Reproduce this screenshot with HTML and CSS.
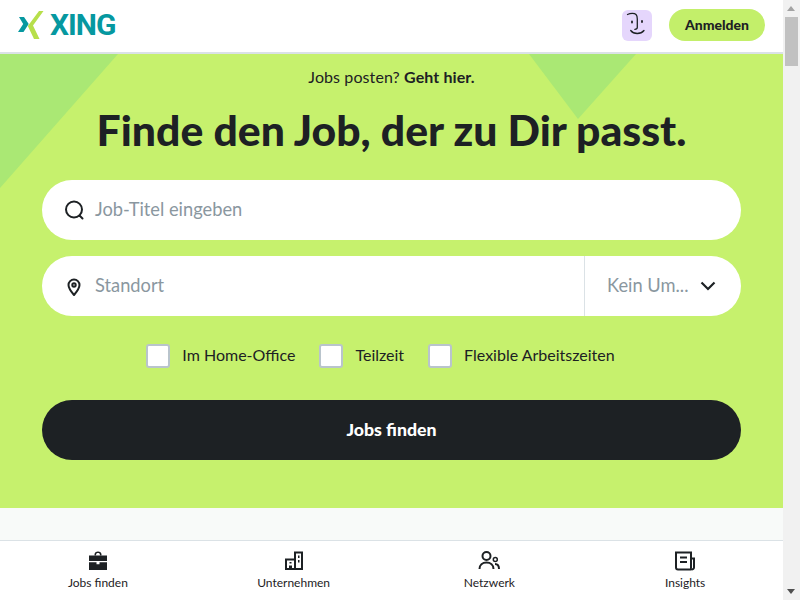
FILE: index.html
```html
<!DOCTYPE html>
<html lang="de">
<head>
<meta charset="utf-8">
<title>XING Jobs</title>
<link rel="stylesheet" href="styles.css">
</head>
<body>
<div class="window">
  <div class="page">
    <header class="topbar">
      <a class="logo">
        <svg class="logo-mark" width="26" height="30" viewBox="0 0 26 30">
          <path fill="#0698a0" d="M1 7h5l4.700 7-5.200 8H0l5.200-8z"/>
          <path fill="#b7df4b" d="M21 1h4.500L15 15.500 21.500 29H16L9.800 16z"/>
        </svg>
        <span class="logo-text">XING</span>
      </a>
      <div class="top-actions">
        <div class="avatar">
          <svg width="30" height="31" viewBox="0 0 30 31" fill="none" stroke="#1d2124" stroke-width="1.300" stroke-linecap="round">
            <path d="M5.500 4.500c3-1.400 7-1.400 8.500 0 1.200 1.200 1.300 2.500 1.300 4.500v8.500c0 1.200-1 1.800-2.500 1.800"/>
            <path d="M8.700 20.500c3 4 10 4 13.300 0"/>
            <path d="M10 11.500v1M20 11v1" stroke-width="1.800"/>
          </svg>
        </div>
        <button class="login">Anmelden</button>
      </div>
    </header>
    <main class="hero">
      <svg class="shape" width="783" height="135" viewBox="0 0 783 135">
        <path fill="#aae874" d="M0 0h118L0 134zM529 0h107l-58 65z"/>
      </svg>
      <p class="post">Jobs posten? <b>Geht hier.</b></p>
      <h1>Finde den Job, der zu Dir passt.</h1>
      <div class="field">
        <svg class="field-icon" width="24" height="24" viewBox="0 0 24 24" fill="none" stroke="#1d2124" stroke-width="2">
          <circle cx="12" cy="11.500" r="8"/>
          <path d="M17.500 17.500l3 3" stroke-linecap="round"/>
        </svg>
        <span class="placeholder">Job-Titel eingeben</span>
      </div>
      <div class="field location">
        <div class="loc-input">
          <svg class="field-icon" width="24" height="24" viewBox="0 0 24 24" fill="none" stroke="#1d2124" stroke-width="2">
            <path d="M12 21c-3-3.500-5.500-6.500-5.500-10a5.500 5.500 0 0 1 11 0c0 3.500-2.500 6.500-5.500 10z" stroke-linejoin="round"/>
            <circle cx="12" cy="11" r="1.700"/>
          </svg>
          <span class="placeholder">Standort</span>
        </div>
        <div class="radius">
          <span class="placeholder">Kein Um...</span>
          <svg width="16" height="10" viewBox="0 0 16 10" fill="none" stroke="#1d2124" stroke-width="2.200">
            <path d="M1.500 1.500L8 8l6.500-6.500"/>
          </svg>
        </div>
      </div>
      <div class="checks">
        <label class="check"><span class="box"></span><span class="check-text">Im Home-Office</span></label>
        <label class="check"><span class="box"></span><span class="check-text">Teilzeit</span></label>
        <label class="check"><span class="box"></span><span class="check-text">Flexible Arbeitszeiten</span></label>
      </div>
      <button class="submit">Jobs finden</button>
    </main>
    <div class="spacer"></div>
    <nav class="tabs">
      <a class="tab">
        <svg width="24" height="24" viewBox="0 0 24 24" fill="#1d2124">
          <path d="M8.500 6.500V5.500C8.500 3.500 10 2.500 12 2.500s3.500 1 3.500 3v1h-1.600v-1c0-1-.8-1.500-1.900-1.500s-1.900.5-1.900 1.500v1z"/>
          <path d="M3 6.500h18V12H3zM3 13.200h7.500v2h3v-2H21V21H3z"/>
        </svg>
        <span>Jobs finden</span>
      </a>
      <a class="tab">
        <svg width="24" height="24" viewBox="0 0 24 24" fill="#1d2124">
          <path fill-rule="evenodd" d="M3 9.500h9V2.500h9V21H3zM14 4.500V19h5V4.500zM5 11.500V19h2v-2.500h3V19h2v-7.500zM7.500 13h2v1.500h-2zM16 6.500h1.500V9H16zM16 11h1.500v2.500H16z"/>
        </svg>
        <span>Unternehmen</span>
      </a>
      <a class="tab">
        <svg width="24" height="24" viewBox="0 0 24 24" fill="none" stroke="#1d2124" stroke-width="2">
          <circle cx="9.500" cy="7" r="4"/>
          <path d="M2.500 20c0-4 3-6.500 7-6.500s7 2.500 7 6.500"/>
          <circle cx="18.300" cy="10.500" r="2" stroke-width="1.500"/>
          <path d="M18 15c2.500 0 4 2 4 5" stroke-width="2"/>
        </svg>
        <span>Netzwerk</span>
      </a>
      <a class="tab">
        <svg width="24" height="24" viewBox="0 0 24 24" fill="none" stroke="#1d2124" stroke-width="2">
          <path d="M18 20.500H5a2 2 0 0 1-2-2V3.500h15v16M18 9.500h3v9a2 2 0 0 1-3 1.700"/>
          <path d="M7 8.500h7M7 13h7"/>
        </svg>
        <span>Insights</span>
      </a>
    </nav>
  </div>
  <div class="scrollbar">
    <span class="arrow-up"></span>
    <span class="thumb"></span>
    <span class="arrow-down"></span>
  </div>
</div>
</body>
</html>
```
FILE: styles.css
```css
* { box-sizing: border-box; }
html, body { margin: 0; height: 100%; }
body { font-family: Lato, "Noto Sans", sans-serif; color: #1d2124; overflow: hidden; }
.window { display: flex; width: 800px; height: 600px; }
.page { flex: 1; min-width: 0; display: flex; flex-direction: column; background: #f8faf9; }

.topbar { height: 54px; flex: none; background: #fff; border-bottom: 2px solid #dbe2e6; display: flex; align-items: center; justify-content: space-between; padding: 0 18px 2px 18px; }
.logo { display: flex; align-items: center; gap: 6px; }
.logo-text { font-family: Roboto, "Noto Sans", sans-serif; font-size: 30px; font-weight: 700; letter-spacing: -1px; color: #0698a0; line-height: 1; }
.top-actions { display: flex; align-items: center; gap: 17px; }
.avatar { width: 30px; height: 31px; border-radius: 6px; background: #e5d6fc; display: flex; }
.login { width: 96px; height: 32px; border: 0; border-radius: 16px; background: #c3ef6a; color: #1d2124; font: 900 14px Lato, sans-serif; padding: 0 0 2px; }

.hero { position: relative; height: 454px; flex: none; background: #c6f16d; padding: 0 42px; display: flex; flex-direction: column; }
.shape { position: absolute; left: 0; top: 0; }
.post { position: relative; margin: 12px 0 0; height: 22px; line-height: 22px; text-align: center; font-size: 16px; letter-spacing: .1px; }
.post b { font-weight: 700; }
h1 { position: relative; margin: 12px 0 20px; height: 60px; line-height: 60px; text-align: center; font-size: 42.700px; font-weight: 900; white-space: nowrap; }
.field { position: relative; height: 60px; margin-top: 16px; background: #fff; border-radius: 30px; display: flex; align-items: center; padding-left: 20px; gap: 9px; }
h1 + .field { margin-top: 0; }
.field-icon { flex: none; }
.placeholder { font-size: 18.300px; color: #8a979f; white-space: nowrap; padding-bottom: 3px; }
.location { padding-left: 0; gap: 0; }
.loc-input { flex: 1; height: 100%; display: flex; align-items: center; gap: 9px; padding-left: 20px; border-right: 1px solid #dbe2e6; }
.radius { width: 156px; flex: none; display: flex; align-items: center; gap: 11px; padding-left: 22px; }
.checks { position: relative; display: flex; justify-content: center; gap: 24px; margin-top: 28px; height: 24px; padding-right: 22px; }
.check { display: flex; align-items: center; gap: 12px; font-size: 16px; white-space: nowrap; }
.check-text { padding-bottom: 3px; }
.box { width: 24px; height: 24px; background: #fff; border: 2px solid #b9c4cc; border-radius: 3px; }
.submit { position: relative; height: 60px; margin-top: 32px; border: 0; border-radius: 30px; background: #1d2124; color: #fff; font: 900 17.700px Lato, sans-serif; padding: 0 0 2px; }

.spacer { flex: 1; }
.tabs { height: 60px; flex: none; background: #fff; border-top: 1px solid #dbe2e6; display: grid; grid-template-columns: repeat(4, 1fr); }
.tab { display: flex; flex-direction: column; align-items: center; padding-top: 8px; font-size: 12px; line-height: 16px; gap: 2px; }

.scrollbar { position: relative; width: 17px; flex: none; background: #f1f1f1; }
.thumb { position: absolute; left: 2px; top: 17px; width: 13px; height: 49px; background: #c1c1c1; }
.arrow-up { position: absolute; left: 4px; top: 6px; border: 4px solid transparent; border-top: 0; border-bottom: 5px solid #a3a3a3; }
.arrow-down { position: absolute; left: 4px; bottom: 6px; border: 4px solid transparent; border-bottom: 0; border-top: 5px solid #505050; }
```
